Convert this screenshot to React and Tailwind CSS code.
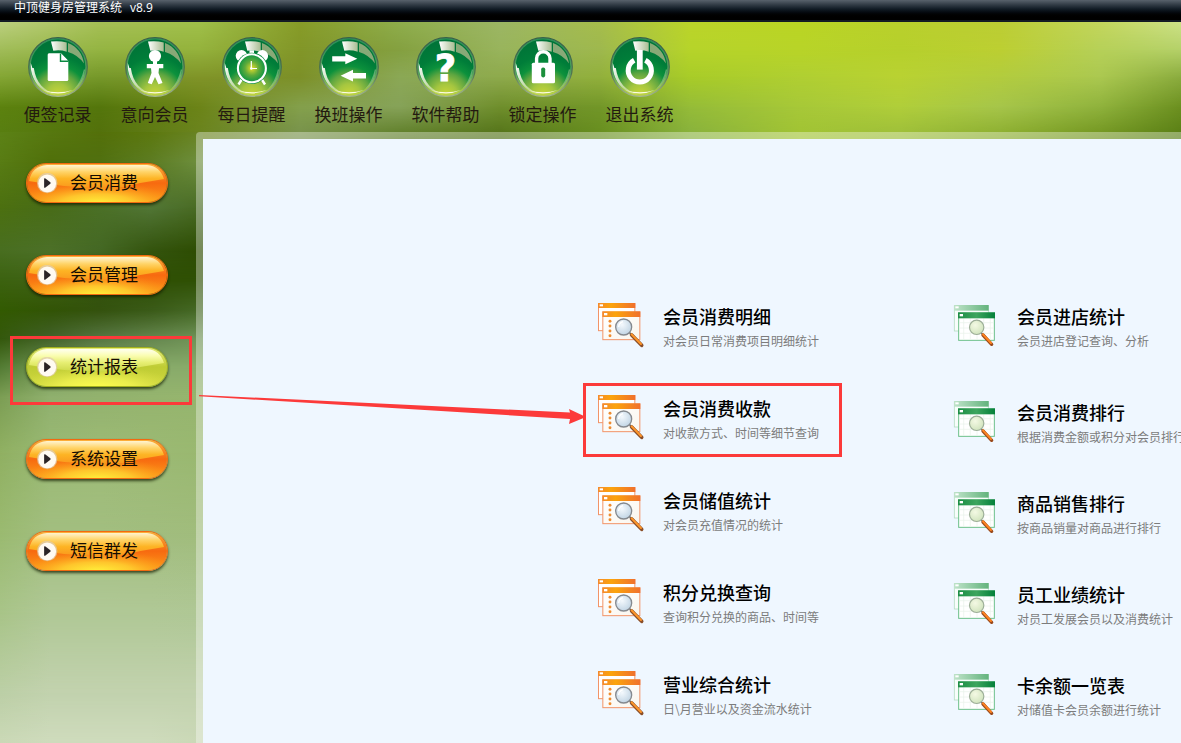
import React from "react";

const HEADER_STOPS = [0, 100, 200, 300, 400, 500, 600, 690, 800, 900, 1000, 1100, 1181];

// Each row lists its height and the colours spread along it.
const HEADER_ROWS = [
  { y: 0, c: ["#bcd07f", "#a6c056", "#a0c04a", "#879c28", "#8fae4c", "#9cb664", "#a6bd4c", "#bbd42a", "#bad524", "#b9d02c", "#bccd34", "#c3d65c", "#cde287"] },
  { y: 28, c: ["#a0bc58", "#94b442", "#94b23c", "#829628", "#84a040", "#98b45c", "#9eb84e", "#b6d42a", "#b8d428", "#b6d02c", "#bccf32", "#b6d058", "#b4d068"] },
  { y: 55, c: ["#84a634", "#76982a", "#809428", "#7c9028", "#8ba856", "#8eaa4c", "#92b03c", "#a8cc28", "#b0cf32", "#b9d232", "#b2cc3e", "#abc850", "#8bac3e"] },
  { y: 85, c: ["#5c820f", "#54760c", "#6c8418", "#84a04c", "#86a258", "#6f8e2c", "#729628", "#95bc38", "#a7c838", "#b0ce3a", "#a6c54a", "#8fb23c", "#6c9020"] },
  { y: 121, c: ["#577d12", "#536f0c", "#6a8420", "#748e4c", "#54741c", "#4c6c14", "#648c1c", "#84ae3e", "#9fc232", "#98ba3a", "#85a828", "#6b8e1a", "#547a12"] },
];

const SIDE_STOPS = [0, 50, 100, 150, 203];
const SIDE_ROWS = [
  { y: 0, c: ["#5c8216", "#577810", "#54700a", "#5c780e", "#6a8424"] },
  { y: 30, c: ["#587c14", "#50700a", "#507010", "#5c7c22", "#6f9040"] },
  { y: 75, c: ["#4c7010", "#486c18", "#4b7026", "#527636", "#486a22"] },
  { y: 118, c: ["#486e20", "#4c7028", "#446824", "#34540e", "#2d4c02"] },
  { y: 148, c: ["#3c6210", "#406216", "#34540e", "#2f5004", "#2f5004"] },
  { y: 178, c: ["#335a02", "#325406", "#34520e", "#3a5a18", "#466a26"] },
  { y: 206, c: ["#34580c", "#42622a", "#567642", "#64864e", "#709458"] },
  { y: 235, c: ["#547c34", "#749858", "#84a868", "#88ab6a", "#88ab6a"] },
  { y: 265, c: ["#7c9e54", "#90b06e", "#93b26e", "#95b46e", "#96b56e"] },
  { y: 320, c: ["#90b062", "#9aba74", "#9dbb76", "#9cba74", "#99b870"] },
  { y: 400, c: ["#9aba70", "#a2be80", "#a2be80", "#a1bd7e", "#a0bc7c"] },
  { y: 480, c: ["#a8c488", "#b0c896", "#b0c896", "#b0c896", "#afc795"] },
  { y: 560, c: ["#bccfa6", "#c2d2ae", "#c2d2ae", "#c2d2ae", "#c2d2ae"] },
  { y: 608, c: ["#cad8b6", "#cedbbc", "#cedbbc", "#cedbbc", "#cad8b6"] },
];

function Mesh({ id, stops, rows, width, height, className }) {
  return (
    <svg className={className} viewBox={`0 0 ${width} ${height}`} preserveAspectRatio="none" aria-hidden="true">
      <defs>
        {rows.map((row, i) => (
          <React.Fragment key={i}>
            <linearGradient id={`${id}-c${i}`} gradientUnits="userSpaceOnUse" x1="0" x2={width} y1="0" y2="0">
              {row.c.map((c, k) => (
                <stop key={k} offset={stops[k] / width} stopColor={c} />
              ))}
            </linearGradient>
            {i > 0 && (
              <>
                <linearGradient id={`${id}-f${i}`} gradientUnits="userSpaceOnUse" x1="0" x2="0" y1={rows[i - 1].y} y2={row.y}>
                  <stop offset="0" stopColor="#fff" stopOpacity="0" />
                  <stop offset="1" stopColor="#fff" />
                </linearGradient>
                <mask id={`${id}-m${i}`} style={{ maskType: "alpha" }} maskUnits="userSpaceOnUse" x="0" y="0" width={width} height={height}>
                  <rect width={width} height={height} fill={`url(#${id}-f${i})`} />
                </mask>
              </>
            )}
          </React.Fragment>
        ))}
      </defs>
      {rows.map((row, i) => (
        <rect key={i} width={width} height={height} fill={`url(#${id}-c${i})`} mask={i > 0 ? `url(#${id}-m${i})` : undefined} />
      ))}
    </svg>
  );
}

const GLYPHS = {
  note: (
    <>
      <path d="M21 16.3H33L40.3 24V42.5Q40.3 44 38.8 44H21.2Q19.7 44 19.7 42.5V17.8Q19.7 16.3 21 16.3Z" fill="#fff" />
      <path d="M32.5 16.5V24.3H40.5" fill="none" stroke="#0a8a41" strokeWidth="1.4" />
      <path d="M34 17.5 39.5 23H34Z" fill="#fff" />
    </>
  ),
  person: (
    <g fill="#fff">
      <circle cx="30" cy="19" r="6.1" />
      <path d="M28 24H32V27H38.3V31.2H34L33.5 36 37.5 46 33.5 47.3 30 40 26.7 47.3 22.8 46 26.5 36 26 31.2H21.8V27H28Z" />
    </g>
  ),
  clock: (
    <>
      <g fill="#fff">
        <circle cx="19.5" cy="18.8" r="5.8" />
        <circle cx="40.3" cy="18.8" r="5.8" />
        <rect x="27.5" y="13.3" width="4.5" height="4.5" />
      </g>
      <path d="M20 42 16.5 47.5M39.5 42 43 47.5" stroke="#fff" strokeWidth="2.4" />
      <circle cx="29.9" cy="31.3" r="15.6" fill="#0a8a41" />
      <circle cx="29.9" cy="31.3" r="14" fill="url(#clockFace)" stroke="#fff" strokeWidth="2.1" />
      <path d="M29.3 24V31.5H35" fill="none" stroke="#fff" strokeWidth="1.2" />
      <circle cx="29.3" cy="31.5" r="1.2" fill="#fff" />
    </>
  ),
  swap: (
    <g fill="#fff">
      <path d="M13.2 19.2H26.3V16.3L38.3 21.7 26.3 27.3V24.5H13.2Z" />
      <path d="M47 36H34V32.8L21.6 38.7 34 44.4V41.4H47Z" />
    </g>
  ),
  help: (
    <text
      x="29.6"
      y="44"
      textAnchor="middle"
      fill="#fff"
      stroke="#fff"
      strokeWidth="0.8"
      fontSize="37"
      fontWeight="700"
      fontFamily="'DejaVu Sans', sans-serif"
    >
      ?
    </text>
  ),
  lock: (
    <>
      <path d="M23.6 27V21.5A6.7 6.7 0 0 1 37 21.5V27" fill="none" stroke="#fff" strokeWidth="3.4" />
      <rect x="18.8" y="25.7" width="23.2" height="20.6" rx="1.5" fill="#fff" />
      <rect x="28.2" y="30.4" width="4" height="10" rx="1.8" fill="#1c8f3c" />
    </>
  ),
  power: (
    <>
      <path d="M24.2 23.3A11.6 11.6 0 1 0 35.4 23.3" fill="none" stroke="#fff" strokeWidth="5" />
      <path d="M29.8 13V32.6" stroke="#fff" strokeWidth="5.8" />
    </>
  ),
};

function Ball({ glyph }) {
  return (
    <svg className="h-[60px] w-[60px]" viewBox="0 0 60 60" aria-hidden="true">
      <circle cx="30" cy="30" r="29.3" fill="url(#ballRim)" stroke="url(#ballEdge)" strokeWidth="1.2" />
      <circle cx="30" cy="29.8" r="27.4" fill="url(#ballFill)" />
      <path d="M2.8 26C1.6 42 13 56.5 28 57.6 16 53.5 8 46 5.8 31L4.4 31Z" fill="url(#ballShine)" />
      <path d="M15 53Q30 59.8 45 53 30 57.6 15 53Z" fill="#fbfce4" />
      <path d="M57 33Q56 46 46 52 53 45 56 32Z" fill="#b9d3a3" opacity=".5" />
      <path d="M23 4.6Q31 3.3 38.7 5.6V14.7Q32 12.6 25.3 13.8Z" fill="url(#ballGlossA)" />
      <path d="M40 6Q53.5 11.5 56 26.5 50 18 40 15Z" fill="#8fac7a" opacity=".95" />
      {GLYPHS[glyph]}
    </svg>
  );
}

function SharedPaints() {
  return (
    <svg className="absolute h-0 w-0" aria-hidden="true">
      <defs>
        <radialGradient id="ballFill" cx=".5" cy="1.02" r=".95">
          <stop offset="0" stopColor="#ccd838" />
          <stop offset=".22" stopColor="#a5c640" />
          <stop offset=".42" stopColor="#5fa640" />
          <stop offset=".56" stopColor="#0c913c" />
          <stop offset=".74" stopColor="#007d39" />
          <stop offset="1" stopColor="#007438" />
        </radialGradient>
        <linearGradient id="ballRim" x1="0" y1="0" x2="0" y2="1">
          <stop offset="0" stopColor="#2a9058" />
          <stop offset=".6" stopColor="#55a05c" />
          <stop offset="1" stopColor="#c2d640" />
        </linearGradient>
        <linearGradient id="ballEdge" x1="0" y1="0" x2="0" y2="1">
          <stop offset="0" stopColor="#37624a" />
          <stop offset=".6" stopColor="#4b7050" />
          <stop offset="1" stopColor="#a4b690" />
        </linearGradient>
        <linearGradient id="ballShine" x1="0" y1="0" x2="1" y2="1">
          <stop offset="0" stopColor="#fff" />
          <stop offset=".5" stopColor="#dde8c4" stopOpacity=".85" />
          <stop offset="1" stopColor="#e8efb0" stopOpacity=".3" />
        </linearGradient>
        <linearGradient id="ballGlossA">
          <stop offset="0" stopColor="#fff" />
          <stop offset="1" stopColor="#a9bd93" />
        </linearGradient>
        <radialGradient id="clockFace">
          <stop offset="0" stopColor="#e4dc2c" />
          <stop offset=".5" stopColor="#5fab3a" />
          <stop offset="1" stopColor="#0b9444" />
        </radialGradient>
        <linearGradient id="orangeBar">
          <stop offset="0" stopColor="#f58a2c" />
          <stop offset=".35" stopColor="#fba40c" />
          <stop offset="1" stopColor="#f0702c" />
        </linearGradient>
        <linearGradient id="greenBar">
          <stop offset="0" stopColor="#1d8e45" />
          <stop offset=".5" stopColor="#3da55e" />
          <stop offset="1" stopColor="#04803a" />
        </linearGradient>
        <linearGradient id="greenBackBar">
          <stop offset="0" stopColor="#bfe3c9" />
          <stop offset="1" stopColor="#63b37d" />
        </linearGradient>
        <linearGradient id="paper" x1="0" y1="0" x2="1" y2="1">
          <stop offset="0" stopColor="#fff" />
          <stop offset="1" stopColor="#faf6ee" />
        </linearGradient>
        <radialGradient id="lensBlue" cx=".4" cy=".35" r=".7">
          <stop offset="0" stopColor="#f4f9fd" />
          <stop offset="1" stopColor="#bfd3e3" />
        </radialGradient>
        <radialGradient id="lensGreen" cx=".4" cy=".35" r=".7">
          <stop offset="0" stopColor="#f4f9e4" />
          <stop offset="1" stopColor="#cfe3bc" />
        </radialGradient>
      </defs>
    </svg>
  );
}

function OrangeReport() {
  return (
    <svg className="h-12 w-12 shrink-0" viewBox="22 26 144 144" aria-hidden="true">
      <rect x="26.5" y="28" width="109" height="81" fill="#fff" stroke="#f29468" strokeWidth="3" />
      <rect x="25" y="26" width="112" height="15" fill="url(#orangeBar)" />
      <rect x="30" y="30" width="10" height="6" fill="#fff" />
      <rect x="39.5" y="53" width="111" height="83" fill="url(#paper)" stroke="#f29468" strokeWidth="3" />
      <rect x="38" y="51" width="114" height="17" fill="url(#orangeBar)" />
      <rect x="43" y="56" width="10" height="7" fill="#fff" />
      {[81, 95, 110, 124].map((y) => (
        <circle key={y} cx="61" cy={y} r="4.4" fill="#ee8c30" />
      ))}
      <path d="M120 116 132 126" stroke="#6b6b6b" strokeWidth="6" />
      <path d="M126 122 156 153" stroke="#8a4e28" strokeWidth="11" strokeLinecap="round" />
      <path d="M126 120 154 149" stroke="#ff962a" strokeWidth="6" strokeLinecap="round" />
      <circle cx="102" cy="98" r="24" fill="url(#lensBlue)" stroke="#85898e" strokeWidth="4" />
      <path d="M87 98Q88 85 100 82" fill="none" stroke="#fff" strokeWidth="4" />
    </svg>
  );
}

function GreenReport() {
  return (
    <svg className="h-12 w-12 shrink-0" viewBox="24 9 144 144" aria-hidden="true">
      <rect x="28" y="17" width="102" height="76" fill="#f8fdfb" stroke="#b5dec3" strokeWidth="2.5" />
      <rect x="27" y="15" width="104" height="17" fill="url(#greenBackBar)" />
      <rect x="31" y="19" width="10" height="6" fill="#fff" />
      <rect x="41" y="39" width="107" height="82" fill="#fff" stroke="#6cc08a" strokeWidth="3" />
      <path d="M56 55V120M76 55V120M96 55V120M116 55V120M136 55V120M42 68H147M42 84H147M42 100H147" stroke="#e9f1ea" strokeWidth="2" />
      <rect x="39" y="37" width="111" height="18" fill="url(#greenBar)" />
      <rect x="44" y="42" width="10" height="7" fill="#fff" />
      <path d="M109 99 120 110" stroke="#6b6b6b" strokeWidth="5" />
      <path d="M114 105 140 133" stroke="#9a4a1c" strokeWidth="10" strokeLinecap="round" />
      <path d="M114 103 138 129" stroke="#ff8420" strokeWidth="6" strokeLinecap="round" />
      <circle cx="95" cy="82" r="21.5" fill="url(#lensGreen)" stroke="#9dae98" strokeWidth="3.5" />
    </svg>
  );
}

const TOOLS = [
  ["note", "便签记录"],
  ["person", "意向会员"],
  ["clock", "每日提醒"],
  ["swap", "换班操作"],
  ["help", "软件帮助"],
  ["lock", "锁定操作"],
  ["power", "退出系统"],
];

const SECTIONS = ["会员消费", "会员管理", "统计报表", "系统设置", "短信群发"];

const ORANGE_ITEMS = [
  ["会员消费明细", "对会员日常消费项目明细统计"],
  ["会员消费收款", "对收款方式、时间等细节查询"],
  ["会员储值统计", "对会员充值情况的统计"],
  ["积分兑换查询", "查询积分兑换的商品、时间等"],
  ["营业综合统计", "日\\月营业以及资金流水统计"],
];

const GREEN_ITEMS = [
  ["会员进店统计", "会员进店登记查询、分析"],
  ["会员消费排行", "根据消费金额或积分对会员排行"],
  ["商品销售排行", "按商品销量对商品进行排行"],
  ["员工业绩统计", "对员工发展会员以及消费统计"],
  ["卡余额一览表", "对储值卡会员余额进行统计"],
];

function SideButton({ label, active }) {
  const tone = active ? "border-[#a3b21e]" : "border-[#f26a10]";
  return (
    <button
      type="button"
      aria-pressed={active}
      className={`relative flex h-10 w-[142px] items-center rounded-full border shadow-[0_2px_3px_rgba(20,30,0,0.75)] ${tone}`}
    >
      <svg className="absolute inset-0 h-full w-full rounded-full" viewBox="0 0 140 38" preserveAspectRatio="none" aria-hidden="true">
        <defs>
          <linearGradient id={active ? "sideBaseG" : "sideBaseO"} x1="0" y1="0" x2="0" y2="1">
            <stop offset="0" stopColor={active ? "#e4ec78" : "#fcae38"} />
            <stop offset=".5" stopColor={active ? "#bfcc34" : "#f76a10"} />
            <stop offset="1" stopColor={active ? "#cfd83e" : "#fc9a18"} />
          </linearGradient>
          <radialGradient id={active ? "sideGlowG" : "sideGlowO"} cx=".5" cy="1.05" r=".58">
            <stop offset="0" stopColor={active ? "#fffe4c" : "#fff43c"} />
            <stop offset=".45" stopColor={active ? "#f0f250" : "#ffd030"} stopOpacity=".85" />
            <stop offset="1" stopColor={active ? "#dce048" : "#ff9a18"} stopOpacity="0" />
          </radialGradient>
          <linearGradient id={active ? "sideGlossG" : "sideGlossO"} x1="0" y1="0" x2="0" y2="1">
            <stop offset="0" stopColor={active ? "#fffff0" : "#fff4d0"} />
            <stop offset=".3" stopColor={active ? "#fafdb0" : "#ffd468"} />
            <stop offset=".6" stopColor={active ? "#e6ee72" : "#fdb424"} />
            <stop offset="1" stopColor={active ? "#ccd848" : "#fa981c"} />
          </linearGradient>
        </defs>
        <rect width="140" height="38" fill={`url(#${active ? "sideBaseG" : "sideBaseO"})`} />
        <rect width="140" height="38" fill={`url(#${active ? "sideGlowG" : "sideGlowO"})`} />
        <path d="M2 17Q5 2 20 1H120Q133 2 137 15 116 18 96 23 50 26 2 17Z" fill={`url(#${active ? "sideGlossG" : "sideGlossO"})`} />
      </svg>
      <svg className="relative ml-2.5 h-[21px] w-[21px]" viewBox="0 0 21 21" aria-hidden="true">
        <circle cx="10.2" cy="10" r="10.2" fill="#e0ccae" opacity=".75" />
        <circle cx="10.2" cy="10.4" r="8.9" fill="#fffaf2" />
        <path d="M7.1 5.8Q7.1 4.9 8.5 5.5L13.3 9.3Q14.1 10 13.3 10.7L8.5 14.5Q7.1 15.3 7.1 14.3Z" fill="#2b2426" />
      </svg>
      <span className="relative -mt-0.5 ml-3 text-[17px] leading-5 text-[#140c02]">{label}</span>
    </button>
  );
}

function ReportItem({ item, icon, marked }) {
  return (
    <a href="#report" className="relative flex whitespace-nowrap">
      {icon}
      <span className="flex flex-col">
        <span className="text-lg leading-[26px] font-medium text-black">{item[0]}</span>
        <span className="text-xs leading-6 text-[#7c7c7c]">{item[1]}</span>
      </span>
      {marked && <span className="absolute -top-3 -left-3.5 h-[74px] w-[259px] border-3 border-[#fc3a3a]" />}
    </a>
  );
}

export default function App() {
  return (
    <div className="flex min-h-screen flex-col overflow-hidden font-['Noto_Sans_CJK_SC',sans-serif]">
      <SharedPaints />
      <div className="h-[22px] border-b-2 border-[#131a24] bg-linear-to-b from-[#59626c] via-[#121c26] via-45% to-black to-90% pl-3.5 text-xs leading-4 text-white">
        <h1 className="flex gap-2 font-['Open_Sans','Noto_Sans_CJK_SC',sans-serif]">
          <span>中顶健身房管理系统</span>
          <span>v8.9</span>
        </h1>
      </div>

      <div className="relative flex grow flex-col">
        <Mesh id="hd" stops={HEADER_STOPS} rows={HEADER_ROWS} width={1181} height={121} className="absolute top-0 left-0 h-[121px] w-full" />

        <nav className="relative flex h-[110px] pt-[15px] pl-[9px]">
          {TOOLS.map(([glyph, label]) => (
            <button key={label} type="button" className="flex w-[97px] flex-col items-center">
              <Ball glyph={glyph} />
              <span className="mt-[5px] text-[17px] leading-6 text-[#231a10]">{label}</span>
            </button>
          ))}
        </nav>

        <div className="relative flex grow">
          <aside className="relative -mr-[7px] w-[203px] shrink-0">
            <Mesh id="sd" stops={SIDE_STOPS} rows={SIDE_ROWS} width={203} height={611} className="absolute inset-0 h-full w-full" />
            <div className="relative flex flex-col gap-[52px] pt-[31px] pl-[26px]">
              {SECTIONS.map((label) => (
                <div key={label} className="relative">
                  <SideButton label={label} active={label === "统计报表"} />
                  {label === "统计报表" && (
                    <span className="pointer-events-none absolute -top-[11px] -left-4 h-[69px] w-[182px] border-3 border-[#fc3a3a]" />
                  )}
                </div>
              ))}
            </div>
          </aside>

          <main className="relative flex min-w-0 grow rounded-tl border-t-[7px] border-l-[7px] border-white/35 bg-[#eff7ff] bg-clip-padding">
            <svg className="absolute top-[248px] left-[-4px] h-[40px] w-[388px]" viewBox="0 0 388 40" aria-hidden="true">
              <path d="M0 8 371 25.5 370 22 387 30 370 37 371 32 0 9.2Z" fill="#fc3a3a" />
            </svg>
            <div className="flex min-w-0 grow overflow-hidden pt-[164px] pl-[394px]">
              <ul className="w-[356px] shrink-0">
                {ORANGE_ITEMS.map((item) => (
                  <li key={item[0]} className="h-[92px] last:h-[72px] [&>a]:gap-[18px]">
                    <ReportItem item={item} icon={<OrangeReport />} marked={item[0] === "会员消费收款"} />
                  </li>
                ))}
              </ul>
              <ul>
                {GREEN_ITEMS.map((item) => (
                  <li key={item[0]} className="h-[91px] first:h-24 last:h-[72px] [&>a]:gap-4">
                    <ReportItem item={item} icon={<GreenReport />} />
                  </li>
                ))}
              </ul>
            </div>
          </main>
        </div>
      </div>
    </div>
  );
}
